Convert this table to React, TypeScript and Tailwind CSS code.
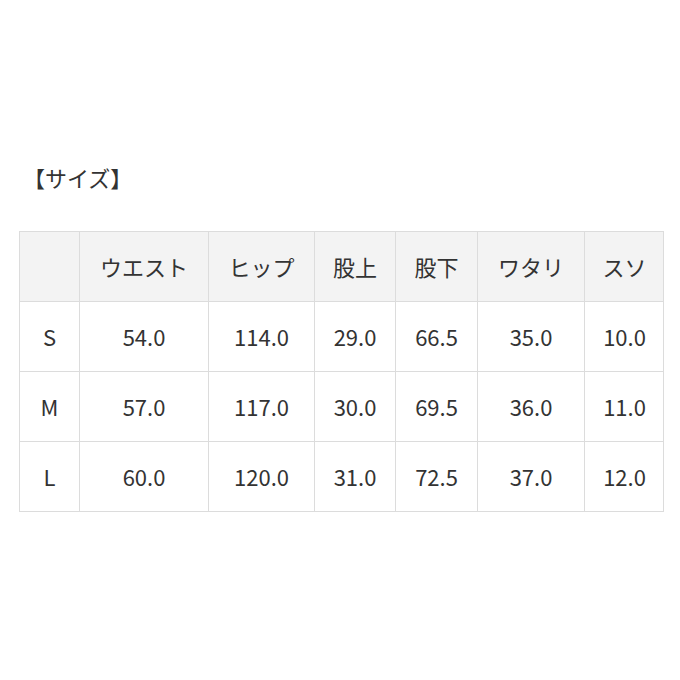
import React from 'react';

const headers = ['', 'ウエスト', 'ヒップ', '股上', '股下', 'ワタリ', 'スソ'];

const rows = [
  ['S', '54.0', '114.0', '29.0', '66.5', '35.0', '10.0'],
  ['M', '57.0', '117.0', '30.0', '69.5', '36.0', '11.0'],
  ['L', '60.0', '120.0', '31.0', '72.5', '37.0', '12.0'],
];

const cols = 'grid grid-cols-[59px_129px_106px_81px_82px_107px_80px]';

function App() {
  return (
    <div
      className="w-[680px] h-[680px] bg-white text-[#333] pt-[162px] pl-[19px]"
      style={{ fontFamily: '"Noto Sans CJK JP", "Noto Sans", sans-serif' }}
    >
      <div className="text-[22px] leading-[30px] pl-[4px]">【サイズ】</div>

      <div className="mt-[39px] w-[645px] border border-[#dcdcdc]">
        {/* header */}
        <div className={`${cols} h-[69px] bg-[#f3f3f3]`}>
          {headers.map((h, i) => (
            <div
              key={i}
              className={`flex items-center justify-center text-[22px] ${i > 0 ? 'border-l border-[#dcdcdc]' : ''}`}
            >
              {h}
            </div>
          ))}
        </div>

        {rows.map((r) => (
          <div key={r[0]} className={`${cols} h-[70px] border-t border-[#dcdcdc]`}>
            {r.map((v, i) => (
              <div
                key={i}
                className={`flex items-center justify-center text-[22px] ${i > 0 ? 'border-l border-[#dcdcdc]' : ''}`}
              >
                {v}
              </div>
            ))}
          </div>
        ))}
      </div>
    </div>
  );
}

export default App;
